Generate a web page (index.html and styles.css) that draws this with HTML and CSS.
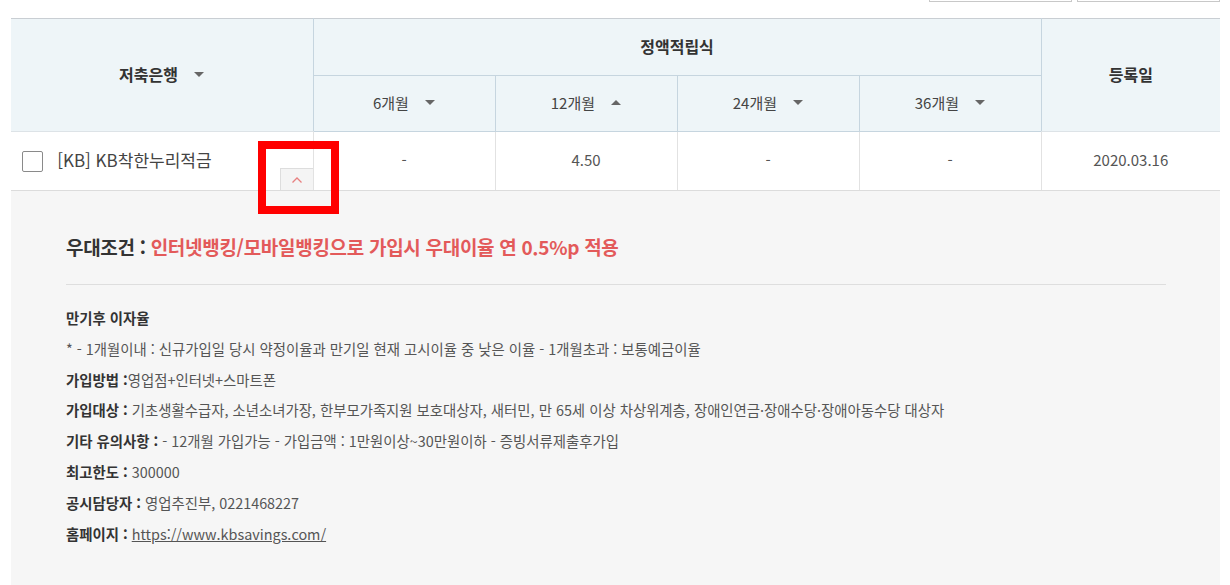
FILE: index.html
```html
<!DOCTYPE html>
<html lang="ko">
<head>
<meta charset="utf-8">
<link rel="stylesheet" href="styles.css">
</head>
<body>
<div class="page">
  <div class="toolbar">
    <div class="selbox"></div>
    <div class="selbox"></div>
  </div>
  <table class="rates">
    <colgroup>
      <col class="c-bank"><col class="c-p"><col class="c-p"><col class="c-p"><col class="c-p"><col class="c-date">
    </colgroup>
    <thead>
      <tr class="h1">
        <th rowspan="2" class="th-main">저축은행 <span class="tri down"></span></th>
        <th colspan="4" class="th-main">정액적립식</th>
        <th rowspan="2" class="th-main th-date">등록일</th>
      </tr>
      <tr class="h2">
        <th>6개월 <span class="tri down"></span></th>
        <th>12개월 <span class="tri up"></span></th>
        <th>24개월 <span class="tri down"></span></th>
        <th>36개월 <span class="tri down"></span></th>
      </tr>
    </thead>
    <tbody>
      <tr class="row">
        <td class="bank">
          <span class="chk"></span>
          <span class="bname">[KB] KB착한누리적금</span>
          <span class="toggle"><svg width="12" height="8" viewBox="0 0 12 8"><path d="M1.5 6.5 L6 2 L10.5 6.5" fill="none" stroke="#e88080" stroke-width="1.3"/></svg></span>
        </td>
        <td>-</td>
        <td>4.50</td>
        <td>-</td>
        <td>-</td>
        <td>2020.03.16</td>
      </tr>
      <tr class="detail-row">
        <td colspan="6">
          <div class="detail">
            <p class="pref"><b>우대조건 :</b> <span class="red">인터넷뱅킹/모바일뱅킹으로 가입시 우대이율 연 0.5%p 적용</span></p>
            <hr class="sep">
            <ul class="info">
              <li><b>만기후 이자율</b></li>
              <li>* - 1개월이내 : 신규가입일 당시 약정이율과 만기일 현재 고시이율 중 낮은 이율 - 1개월초과 : 보통예금이율</li>
              <li><b>가입방법 :</b>영업점+인터넷+스마트폰</li>
              <li><b>가입대상 :</b> 기초생활수급자, 소년소녀가장, 한부모가족지원 보호대상자, 새터민, 만 65세 이상 차상위계층, 장애인연금·장애수당·장애아동수당 대상자</li>
              <li><b>기타 유의사항 :</b> - 12개월 가입가능 - 가입금액 : 1만원이상~30만원이하 - 증빙서류제출후가입</li>
              <li><b>최고한도 :</b> 300000</li>
              <li><b>공시담당자 :</b> 영업추진부, 0221468227</li>
              <li><b>홈페이지 :</b> <a href="#">https://www.kbsavings.com/</a></li>
            </ul>
          </div>
        </td>
      </tr>
    </tbody>
  </table>
  <div class="highlight"></div>
</div>
</body>
</html>
```

FILE: styles.css
```css
* { box-sizing: border-box; }
html, body { margin: 0; padding: 0; background: #fff; }
body {
  font-family: "Noto Sans CJK KR", "Noto Sans", sans-serif;
  color: #555;
}
.page {
  position: relative;
  width: 1230px;
  height: 585px;
  overflow: hidden;
  padding-left: 11px;
}
.toolbar {
  display: flex;
  justify-content: flex-end;
  gap: 5px;
  width: 1209px;
  height: 18px;
}
.selbox {
  width: 143px;
  height: 2px;
  border: 1px solid #c8c8c8;
  border-top: none;
}
.rates {
  width: 1209px;
  border-collapse: collapse;
  table-layout: fixed;
  border-top: 1px solid #c9ced3;
}
.c-bank { width: 302px; }
.c-p { width: 182px; }
.c-date { width: 179px; }
.rates th {
  background: #eef5f8;
  font-weight: 400;
  font-size: 15px;
  color: #444;
  text-align: center;
  border: 1px solid #c6d5df;
  border-top: none;
  padding: 0 0 2px 0;
}
.rates th:first-child { border-left: none; }
.rates .th-date { border-right: none; }
.rates th.th-main {
  font-weight: 700;
  font-size: 16px;
  color: #333;
}
.rates .th-date { font-size: 17px; }
.h1 { height: 57px; }
.h2 { height: 56px; }
.h1 th { border-bottom: 1px solid #c6d5df; }
.rates th[rowspan] { border-bottom: 1px solid #dde3e7; }
.tri {
  display: inline-block;
  width: 0; height: 0;
  border-left: 5px solid transparent;
  border-right: 5px solid transparent;
  margin-left: 12px;
  vertical-align: middle;
  position: relative;
  top: -2px;
}
.tri.down { border-top: 5px solid #666; }
.tri.up { border-bottom: 5px solid #666; }
.row { height: 59px; }
.row td {
  font-size: 15px;
  color: #555;
  text-align: center;
  border-left: 1px solid #e2e2e2;
  border-bottom: 1px solid #dcdcdc;
  padding: 0 0 4px 0;
}
.row td:first-child { border-left: none; }
.row td.bank {
  text-align: left;
  position: relative;
  padding-left: 11px;
}
.chk {
  display: inline-block;
  width: 21px; height: 21px;
  border: 1px solid #8a8a8a;
  border-radius: 2px;
  vertical-align: middle;
  background: #fff;
  position: relative;
  top: 2px;
}
.bname {
  font-size: 17px;
  color: #444;
  margin-left: 10px;
  vertical-align: middle;
}
.toggle {
  position: absolute;
  right: 0;
  bottom: 0;
  width: 33px;
  height: 22px;
  background: #f4f4f4;
  border: 1px solid #ddd;
  border-bottom: none;
  border-right: none;
  display: flex;
  align-items: center;
  justify-content: center;
}
.detail-row td { padding: 0; background: #f6f6f6; }
.detail {
  padding: 42px 54px 60px 55px;
  height: 395px;
}
.pref {
  margin: 0;
  font-size: 19px;
  line-height: 28px;
  letter-spacing: -0.3px;
}
.pref b { color: #333; }
.red { color: #e35a5a; font-weight: 700; }
.sep {
  border: none;
  border-top: 1px solid #dedede;
  margin: 23px 0 0 0;
  height: 0;
}
.info {
  list-style: none;
  margin: 17px 0 0 0;
  padding: 0;
  font-size: 14.4px;
  color: #555;
}
.info li { height: 30.8px; line-height: 31px; white-space: nowrap; }
.info b { color: #333; font-weight: 700; }
.info a { color: #555; text-decoration: underline; }
.highlight {
  position: absolute;
  left: 258px;
  top: 141px;
  width: 81px;
  height: 73px;
  border: 8px solid #ff0000;
}
```
